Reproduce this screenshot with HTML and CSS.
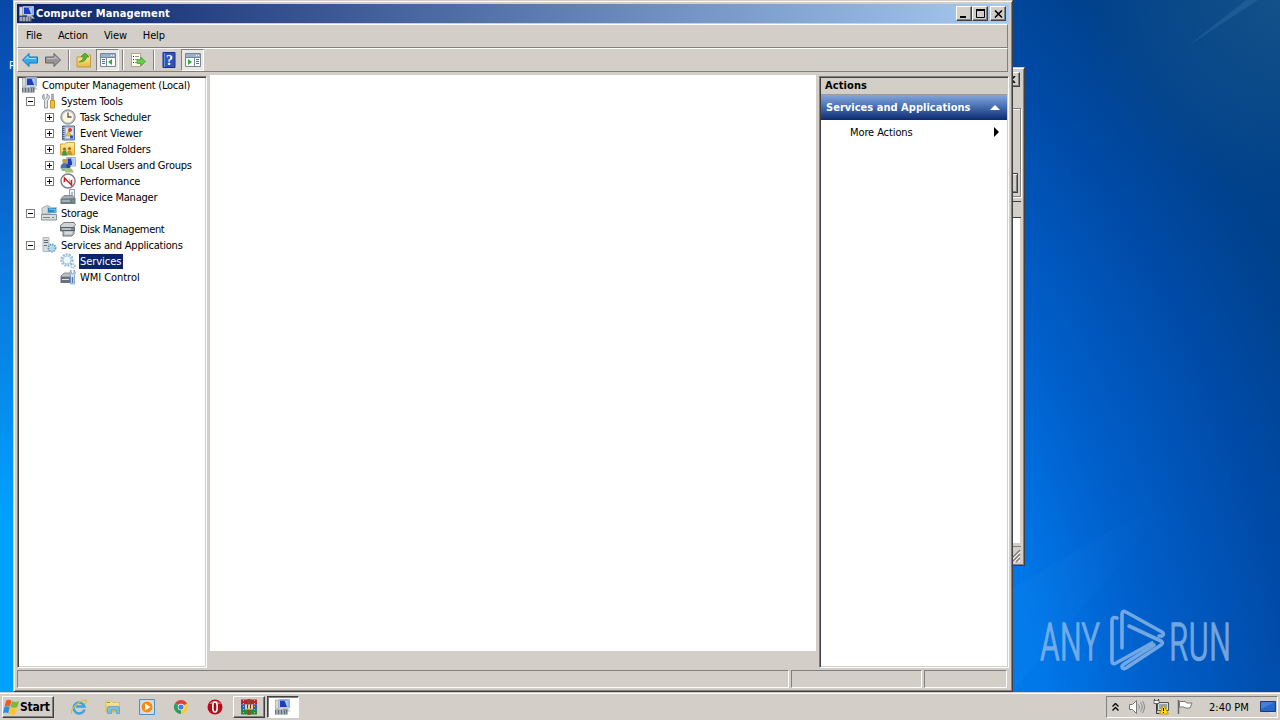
FILE: index.html
```html
<!DOCTYPE html>
<html lang="en">
<head>
    <meta charset="UTF-8">
    <meta name="viewport" content="width=device-width, initial-scale=1.0">
    <title>Computer Management</title>
    <link rel="stylesheet" href="styles.css">
</head>
<body>
    <!-- Shared icons -->
    <svg class="defs" width="0" height="0">
        <defs>
            <linearGradient id="gold" x1="0" y1="0" x2="0" y2="1">
                <stop offset="0" stop-color="#fff0a0"/>
                <stop offset="1" stop-color="#e8b840"/>
            </linearGradient>
            <linearGradient id="ray" x1="0" y1="0" x2="1" y2="0">
                <stop offset="0" stop-color="#40a8ff" stop-opacity=".07"/>
                <stop offset="1" stop-color="#40a8ff" stop-opacity="0"/>
            </linearGradient>
            <symbol id="computer" viewBox="0 0 16 16">
                <path d="M.5 1h3v8.500h-3z" fill="#d8dce0" stroke="#9aa2aa" stroke-width=".7"/>
                <path d="M4 .5h10.500v8.500H4z" fill="#dce4ee" stroke="#a4afbe"/>
                <path d="M5 1.500h8.500v6.500H5z" fill="#1c3cc4"/>
                <path d="M9.500 1.500h4v6.500h-1.500z" fill="#a9c8f8"/>
                <path d="M8 9h4l4 3.500H8z" fill="#c2c8d0"/>
                <path d="M0 10.500h12.500v5H0z" fill="#66717b"/>
                <path d="M1 12h10M1 14h10" stroke="#dbe1e6" stroke-dasharray="2 1"/>
            </symbol>
            <symbol id="panel" viewBox="0 0 16 14">
                <path d="M.5 .5h15v13H.5z" fill="#fff" stroke="#74869c"/>
                <path d="M1 1h14v3H1z" fill="#9bb0ca"/>
                <path d="M11 2.500h1M13 2.500h1" stroke="#fff"/>
                <path d="M1 4.500h14" stroke="#74869c"/>
            </symbol>
        </defs>
    </svg>

    <div class="desktop">
        <svg class="rays" width="268" height="692" viewBox="0 0 268 692">
            <path d="M176 46L234 0h12z" fill="#7ab4e0" opacity=".14"/>
            <path d="M0 588L170 490 0 692z" fill="url(#ray)"/>
        </svg>
        <span class="desktop-label">R</span>

        <svg class="watermark" width="200" height="80" viewBox="0 0 200 80">
            <text x="2" y="52" textLength="60" lengthAdjust="spacingAndGlyphs">ANY</text>
            <text x="131" y="52" textLength="62" lengthAdjust="spacingAndGlyphs">RUN</text>
            <g fill="none" stroke="#8fb9ea" stroke-width="3.600" stroke-linejoin="round" stroke-linecap="round">
                <path d="M79 10q-5-2-5 3v40q0 4 4 2l36-20"/>
                <path d="M84 40V6q0-4 4-2l36 20q3 2 0 4l-3 0"/>
                <path d="M91 18l32 15q3 2 0 4L88 60q-4 2-4-2l2-2 30-19"/>
            </g>
        </svg>

        <!-- Window behind, only the right edge shows -->
        <div class="window back-window">
            <div class="back-title"><span class="caption-btn"><svg width="8" height="7" viewBox="0 0 8 7"><path d="M0 0l7 7M7 0L0 7" stroke="#000" stroke-width="1.600"/></svg></span></div>
            <div class="back-group"><span class="back-button"></span></div>
            <div class="back-header"></div>
            <div class="back-list"></div>
            <div class="back-status"><svg width="14" height="14" viewBox="0 0 14 14"><path d="M1 13L13 1M5 13l8-8M9 13l4-4" stroke="#808080" stroke-width="1.500"/><path d="M3 13L13 3M7 13l6-6M11 13l2-2" stroke="#fff"/></svg></div>
        </div>

        <!-- Main window -->
        <div class="window main-window">
            <div class="title-bar">
                <svg class="icon"><use href="#computer"/></svg>
                <span class="title">Computer Management</span>
                <div class="caption">
                    <span class="caption-btn"><svg width="8" height="8"><path d="M0 6h6v2H0z"/></svg></span>
                    <span class="caption-btn"><svg width="9" height="9"><path d="M.5 .5h8v8h-8z" fill="none" stroke="#000"/><path d="M0 1h9" stroke="#000" stroke-width="2"/></svg></span>
                    <span class="caption-btn close"><svg width="9" height="8" viewBox="0 0 9 8"><path d="M1 .5l7 7M8 .5l-7 7" stroke="#000" stroke-width="1.600"/></svg></span>
                </div>
            </div>

            <div class="band menu">
                <span>File</span>
                <span>Action</span>
                <span>View</span>
                <span>Help</span>
            </div>

            <div class="band toolbar">
                <svg class="tool" viewBox="0 0 16 16"><path d="M.5 8l6.500-6.500v3.500h8.500v6H7v3.500z" fill="#35aaf0" stroke="#1274b8"/><path d="M3 7.500l3-3v2h8" fill="none" stroke="#a4e0ff"/></svg>
                <svg class="tool forward" viewBox="0 0 16 16"><path d="M15.500 8L9 1.500v3.500H.5v6H9v3.500z" fill="#969696" stroke="#626262"/><path d="M2 6.500h8v-2l3 3" fill="none" stroke="#c4c4c4"/></svg>
                <i class="separator"></i>
                <svg class="tool" viewBox="0 0 16 16"><path d="M1 15V5h4l1-2h8.500v12z" fill="url(#gold)" stroke="#c39a3c"/><path d="M3 10c2-1 4-2 4.500-5H5l4-4 4 4h-2.500c0 3-3 5-7.500 5z" fill="#52b82e" stroke="#2d8420" stroke-width=".6"/></svg>
                <span class="tool-button pressed"><svg width="16" height="14"><use href="#panel"/><path d="M6.500 5v8" stroke="#74869c"/><path d="M2 6.500h3M2 8.500h3M2 10.500h3" stroke="#5a7290"/><path d="M8 9l4-3v6z" fill="#36a936"/></svg></span>
                <i class="separator"></i>
                <svg class="tool" viewBox="0 0 16 16"><path d="M1.500 1.500h9v13h-9z" fill="#fffce8" stroke="#b0a884"/><path d="M3 4.500h1M3 7.500h1M3 10.500h1" stroke="#333"/><path d="M5 4.500h4M5 7.500h3M5 10.500h3" stroke="#8a90b0"/><path d="M7 7.500h4V5l4.500 4.500L11 14v-2.500H7z" fill="#64d048" stroke="#36a02a" stroke-width=".7"/></svg>
                <i class="separator"></i>
                <svg class="tool help" viewBox="0 0 16 16"><path d="M2 .5h12v15H2z" fill="#3152bd" stroke="#1b3180"/><path d="M3.500 1v14" stroke="#6c8fe8"/><text x="5" y="13" class="question">?</text></svg>
                <span class="tool-button pressed"><svg width="16" height="14"><use href="#panel"/><path d="M9.500 5v8" stroke="#74869c"/><path d="M11 6.500h3M11 8.500h3M11 10.500h3" stroke="#5a7290"/><path d="M3 6l4 3-4 3z" fill="#36a936"/></svg></span>
            </div>

            <div class="content">
                <ul class="tree">
                    <li class="root"><svg class="icon"><use href="#computer"/></svg><span>Computer Management (Local)</span></li>
                    <li class="level1"><i class="toggle"></i><svg class="icon" viewBox="0 0 16 16"><path d="M3 1v4l1.500 1L6 5V1c3 1 3 5 .5 6.500V15h-3V7.500C1 6 1 2 3 1z" fill="#e2e5e8" stroke="#7c848c" stroke-width=".8"/><path d="M10.500 1h2v6h-2z" fill="#aab2ba" stroke="#7c848c" stroke-width=".5"/><path d="M9.500 7.500h4v7.500h-4z" fill="#f4c22c" stroke="#b88612" stroke-width=".8"/></svg><span>System Tools</span></li>
                    <li class="level2"><i class="toggle plus"></i><svg class="icon" viewBox="0 0 16 16"><circle cx="8" cy="8" r="7.200" fill="#b8bcc4" stroke="#74787e" stroke-width=".8"/><circle cx="8" cy="8" r="5.500" fill="#fdf6dc"/><path d="M8 3.500V8h3.500" fill="none" stroke="#4c5870" stroke-width="1.300"/></svg><span>Task Scheduler</span></li>
                    <li class="level2"><i class="toggle plus"></i><svg class="icon" viewBox="0 0 16 16"><path d="M2.500 1h12v14h-12z" fill="#a9c0e6" stroke="#5a6c90"/><path d="M3.500 1v14" stroke="#4c5c80" stroke-width="2" stroke-dasharray="1 1"/><path d="M6 3h7v10H6z" fill="#dfe8f4"/><circle cx="10" cy="5" r="2" fill="#d63a2c"/><path d="M8.500 6l3 5h-5.500z" fill="#f5cb30" stroke="#b07810" stroke-width=".5"/><path d="M10 10.500h3v3h-3z" fill="#3658ac"/></svg><span>Event Viewer</span></li>
                    <li class="level2"><i class="toggle plus"></i><svg class="icon" viewBox="0 0 16 16"><path d="M.5 14V3h5l1-1.500h8V14z" fill="url(#gold)" stroke="#d3a63c"/><circle cx="4.500" cy="8" r="1.500" fill="#a8641c"/><circle cx="9.500" cy="7.500" r="1.500" fill="#a8641c"/><path d="M2 14.500q0-5 2.500-5t2.500 5z" fill="#3a9a4c"/><path d="M7 14q0-4.500 2.500-4.500t2.500 4.500z" fill="#c8902c"/></svg><span>Shared Folders</span></li>
                    <li class="level2"><i class="toggle plus"></i><svg class="icon" viewBox="0 0 16 16"><path d="M6.500 .5h9v8.500h-9z" fill="#dfe6ee" stroke="#a4b0c2"/><path d="M7.500 1.500h4.500v6.500H7.500z" fill="#1c3cc4"/><path d="M11 1.500h3.500v6.500h-2z" fill="#a9c8f8"/><circle cx="4.500" cy="4" r="2.300" fill="#c89838"/><path d="M.5 11.500q0-5.500 4-5.500t4 5.500z" fill="#4474ba"/><circle cx="8.500" cy="9" r="2.200" fill="#3a4678"/><path d="M5 15.500q0-4.500 4-4.500t4.500 4.500z" fill="#a6c080"/><path d="M1 11.500h4.500v2.500H2z" fill="#8cbc6c"/></svg><span>Local Users and Groups</span></li>
                    <li class="level2"><i class="toggle plus"></i><svg class="icon" viewBox="0 0 16 16"><circle cx="8" cy="8" r="7" fill="#fff" stroke="#7c8286" stroke-width="1.500"/><path d="M3.500 10l1-5 2.500 2M9 5.500l1 4 3-4" fill="none" stroke="#c8c8c8"/><path d="M4.500 9V5l7 7V7" fill="none" stroke="#d01c24" stroke-width="1.500"/></svg><span>Performance</span></li>
                    <li class="level2"><i class="toggle none"></i><svg class="icon" viewBox="0 0 16 16"><path d="M9.500 .5h5v9h-5z" fill="#f4f5f6" stroke="#9aa0a6"/><path d="M12 3v4" stroke="#6090b0"/><path d="M1 9.500l3-3h8l3.500 3z" fill="#a5adb4" stroke="#6b737a" stroke-width=".7"/><path d="M.5 10h15v5H.5z" fill="#727b84"/><path d="M2 12h8" stroke="#d9dfe3"/><path d="M12 12h2" stroke="#50d060"/></svg><span>Device Manager</span></li>
                    <li class="level1"><i class="toggle"></i><svg class="icon" viewBox="0 0 16 16"><path d="M1 3l5-2.500 3 1V9H1z" fill="#d9dcdf" stroke="#888f94" stroke-width=".7"/><path d="M6.500 2.500h9V8h-9z" fill="#2888c4" stroke="#b2c5d0"/><path d="M8 4l6 .5v2.500" fill="none" stroke="#82d4f4"/><path d="M.5 9.500h15v5.500H.5z" fill="#d8dcde" stroke="#777f84" stroke-width=".8"/><path d="M2 12.500h7" stroke="#7e878d"/><path d="M11 12.500h2" stroke="#32b04a"/></svg><span>Storage</span></li>
                    <li class="level2"><i class="toggle none"></i><svg class="icon" viewBox="0 0 16 16"><path d="M.5 4.500L4 1.500h10l1.500 2-2 3H.5z" fill="#d0d4d6" stroke="#596066" stroke-width=".8"/><path d="M.5 6.500h14v3.500H.5z" fill="#828a90" stroke="#50575c" stroke-width=".8"/><path d="M3 9.500h11v3L12 15H3z" fill="#bcc2c6" stroke="#50575c" stroke-width=".8"/><path d="M2 8h9M5 12h7" stroke="#f0f2f4"/></svg><span class="tight">Disk Management</span></li>
                    <li class="level1"><i class="toggle"></i><svg class="icon" viewBox="0 0 16 16"><path d="M2 .5h6v14H2z" fill="#d7dce1" stroke="#a3acb4" stroke-width=".8"/><path d="M3 3.500h4M3 5.500h4M3 8.500h3" stroke="#616c76"/><circle cx="11" cy="11" r="3.500" fill="#d7edf8" stroke="#5f9cc2" stroke-width="2" stroke-dasharray="1.500 .8"/><circle cx="11" cy="11" r="1.200" fill="#fff" stroke="#5f9cc2" stroke-width=".6"/></svg><span>Services and Applications</span></li>
                    <li class="level2 selected"><i class="toggle none"></i><svg class="icon" viewBox="0 0 16 16"><circle cx="7" cy="7" r="5.500" fill="none" stroke="#9abdd8" stroke-width="2.500" stroke-dasharray="2 1"/><circle cx="7" cy="7" r="4" fill="#f0f9ff" stroke="#a9cce2"/><circle cx="13" cy="13" r="2" fill="#e9f5fa" stroke="#8baec4" stroke-width="1.300" stroke-dasharray="1 .7"/></svg><span class="wide">Services</span></li>
                    <li class="level2"><i class="toggle none"></i><svg class="icon" viewBox="0 0 16 16"><path d="M1 7l3-3h8v4H1z" fill="#bac0c6" stroke="#68727c" stroke-width=".7"/><path d="M.5 8h12v6H.5z" fill="#66717b"/><path d="M2 10.500h7" stroke="#dce1e5"/><path d="M11 1v3l1.500 1L14 4V1q2.500 2.500 .5 5v9h-4V6q-2-2.500 .5-5z" fill="#d9e7fa" stroke="#6886b4" stroke-width=".7"/><path d="M12.500 8v6" stroke="#4a78d0" stroke-width="1.500"/></svg><span class="wide">WMI Control</span></li>
                </ul>

                <div class="details"></div>

                <div class="actions">
                    <div class="actions-title">Actions</div>
                    <div class="actions-group">
                        <span>Services and Applications</span>
                        <i class="arrow-up"></i>
                    </div>
                    <div class="action">
                        <span>More Actions</span>
                        <i class="arrow-right"></i>
                    </div>
                </div>
            </div>

            <div class="status-bar">
                <div class="status"></div>
                <div class="status medium"></div>
                <div class="status small"></div>
            </div>
        </div>
    </div>

    <div class="taskbar">
        <div class="start">
            <svg width="17" height="17" viewBox="0 0 16 16"><path d="M3 1.500q2.500-1.500 5 0L6.500 7q-2.500-1.500-5 0z" fill="#ee5a24"/><path d="M8.500 2q3 1.500 6.500 0l-1.500 5.500q-3 1.500-6.500 0z" fill="#77bb30"/><path d="M1.300 7.500q2.500-1.500 5 0L5 13.500q-2.500-1.500-5 0z" fill="#2c8ed8"/><path d="M7 8.200q3 1.500 6.300 0L12 14q-3 1.500-6.500 0z" fill="#ffc42a"/></svg>
            <span>Start</span>
        </div>
        <div class="quick-launch">
            <svg viewBox="0 0 16 16"><path d="M13.500 10.500A5.500 5.500 0 1 1 13.500 7.500H5" fill="none" stroke="#38a5e4" stroke-width="2.500"/><path d="M1 14.500C-2 12 8 1 14.500 1q2 .5-.5 4" fill="none" stroke="#e4b937" stroke-width="1.200"/></svg>
            <svg viewBox="0 0 16 16"><path d="M1 2h5l1 1.500h7.500V13H1z" fill="url(#gold)" stroke="#d7b65c" stroke-width=".8"/><path d="M2 3.500h3" stroke="#4caf4c"/><path d="M2.500 14.500V9q0-1.500 1.500-1.500h9q1.500 0 1.500 1.500v5.500h-3V11h-5v3.500z" fill="#79bfe6" stroke="#4c94c4" stroke-width=".6"/></svg>
            <svg viewBox="0 0 16 16"><path d="M.5 .5h15v15H.5z" fill="#c2ddf2" stroke="#4891cb"/><circle cx="8" cy="8" r="6" fill="#f58a14" stroke="#fff" stroke-width=".6"/><path d="M6 4.500L11.500 8 6 11.500z" fill="#fff"/></svg>
            <svg viewBox="0 0 16 16"><path d="M8 8L1.900 4.500A7 7 0 0 1 14.100 4.500z" fill="#dc4437"/><path d="M8 8l6.100-3.500A7 7 0 0 1 8 15z" fill="#f7cb3e"/><path d="M8 8v7A7 7 0 0 1 1.900 4.500z" fill="#2e9f59"/><circle cx="8" cy="8" r="3.300" fill="#fff"/><circle cx="8" cy="8" r="2.600" fill="#437fe2"/></svg>
            <svg viewBox="0 0 16 16"><circle cx="8" cy="8" r="7.500" fill="#b80d18"/><path d="M2 5a7 6 0 0 1 12 0z" fill="#df6a6a"/><ellipse cx="8" cy="8" rx="2.200" ry="5" fill="#a70814" stroke="#fff" stroke-width="1.700"/></svg>
        </div>
        <div class="task"><svg width="16" height="16" viewBox="0 0 16 16"><path d="M0 .5h16v5H0z" fill="#bc2332"/><path d="M0 5.500h16V10H0z" fill="#2d5fc0"/><path d="M0 10h16v5.500H0z" fill="#238c3c"/><path d="M6.500 0h3v16h-3z" fill="#84501e"/><path d="M4 5.500h8v5H4z" fill="#e2cfaa"/><path d="M6.500 5.500v4M9.500 5.500v4" stroke="#5c3818"/><path d="M2.500 1v14M13.500 1v14" stroke="#d8b85c" stroke-dasharray="1 2"/></svg></div>
        <div class="task active"><svg width="16" height="16"><use href="#computer"/></svg></div>

        <div class="tray">
            <svg class="chevrons" width="7" height="8" viewBox="0 0 7 8"><path d="M.5 3.500l3-3 3 3M.5 7.500l3-3 3 3" fill="none" stroke="#000" stroke-width="1.300"/></svg>
            <svg class="speaker" width="16" height="14" viewBox="0 0 16 14"><path d="M.5 4.500h3l4-4v13l-4-4h-3z" fill="#fff" stroke="#777"/><path d="M9.500 4.500q2 2.500 0 5M11.500 2.500q3.500 4.500 0 9M13.500 1q4 6 0 12" fill="none" stroke="#888"/></svg>
            <svg class="network" width="16" height="16" viewBox="0 0 16 16"><path d="M4.500 3.500h11v8h-11z" fill="#ddd" stroke="#555"/><path d="M6 5h8v5H6z" fill="#98a6b0"/><path d="M1.500 0v4h4V0M3.500 4v10.500h4" fill="none" stroke="#333"/><path d="M1 1.500h5v3H1z" fill="#fff" stroke="#444" stroke-width=".7"/><path d="M10.500 6l5 9h-9z" fill="#ffd91c" stroke="#b88b00" stroke-width=".8"/><path d="M10.500 9v3M10.500 13v1" stroke="#000"/></svg>
            <svg class="flag" width="16" height="14" viewBox="0 0 16 14"><path d="M1.500 0v14" stroke="#666" stroke-width="1.500"/><path d="M2.500 1.500h6l1 1.500h5.500l-2 5H8L7 7H2.500z" fill="#fff" stroke="#777"/></svg>
            <span class="clock">2:40 PM</span>
            <svg width="16" height="13" viewBox="0 0 16 13"><path d="M.5 .5h15v10H.5z" fill="#2866c8" stroke="#173b7e"/><path d="M1 1h14L1 8z" fill="#4580d4"/><path d="M9 11h5v1.500H9z" fill="#c4e4fa"/></svg>
        </div>
    </div>
</body>
</html>
```

FILE: styles.css
```css
* {
    margin: 0;
    padding: 0;
    box-sizing: border-box;
}

body {
    width: 1280px;
    height: 720px;
    overflow: hidden;
    font-family: 'DejaVu Sans Condensed', 'DejaVu Sans', sans-serif;
    font-stretch: condensed;
    font-size: 11px;
    letter-spacing: -0.22px;
    color: #000;
    background-color: #d4cec8;
}

svg {
    display: block;
    flex-shrink: 0;
}

.defs {
    position: absolute;
}

/* Desktop */
.desktop {
    position: relative;
    height: 692px;
    overflow: hidden;
    background:
        linear-gradient(#0848a8 0, #0858c0 120px, #087adf 290px, #00a2ff 520px, #00a2ff 100%) 0 0 / 14px 100% no-repeat,
        radial-gradient(circle at 100% 0, rgba(32, 92, 140, 0.6), transparent 200px),
        radial-gradient(circle at 200px 820px, #0078ea 850px, #0060cc 960px, #004ba8 1100px, #00418c 1210px, #004086 1300px);
}

.rays {
    position: absolute;
    top: 0;
    right: 0;
}

.desktop-label {
    position: absolute;
    top: 59px;
    left: 9px;
    color: #fff;
}

.watermark {
    position: absolute;
    left: 1038px;
    top: 608px;
    overflow: visible;
    opacity: 0.8;
}

.watermark text {
    font-family: Roboto, sans-serif;
    font-size: 52px;
    font-weight: 300;
    letter-spacing: 0;
    fill: #8fb9ea;
    stroke: #8fb9ea;
    stroke-width: 1.4px;
}

/* Windows */
.window {
    position: absolute;
    display: flex;
    flex-direction: column;
    background-color: #d4cec8;
    border: 1px solid;
    border-color: #d4cec8 #404040 #404040 #d4cec8;
    box-shadow: inset 1px 1px #fff, inset -1px -1px #808080;
}

.main-window {
    top: 0;
    left: 13px;
    width: 1000px;
    height: 692px;
    padding: 3px;
}

.title-bar {
    display: flex;
    align-items: center;
    height: 19px;
    padding: 0 3px 0 2px;
    color: #fff;
    background: linear-gradient(90deg, #0a246a, #a6caf0);
}

.icon {
    width: 16px;
    height: 16px;
}

.title {
    margin-left: 1px;
    font-weight: bold;
    letter-spacing: 0.15px;
}

.caption {
    display: flex;
    margin-left: auto;
}

.caption-btn {
    display: flex;
    align-items: center;
    justify-content: center;
    width: 16px;
    height: 15px;
    background-color: #d4cec8;
    border: 1px solid;
    border-color: #fff #404040 #404040 #fff;
    box-shadow: inset -1px -1px #808080;
}

.caption-btn.close {
    margin-left: 2px;
}

.band {
    display: flex;
    align-items: center;
    height: 24px;
    margin-right: 1px;
    border: 1px solid #fff;
    border-right-color: #808080;
    border-bottom-color: #808080;
}

.menu {
    gap: 16px;
    margin-top: 1px;
    padding-left: 8px;
    line-height: 22px;
    letter-spacing: -0.15px;
}

.toolbar {
    padding: 0 0 0 4px;
}

.tool {
    width: 16px;
    height: 16px;
}

.forward {
    margin-left: 7px;
}

.separator {
    width: 2px;
    height: 20px;
    margin: 0 6px 0 7px;
    border-left: 1px solid #808080;
    border-right: 1px solid #fff;
}

.tool-button {
    display: flex;
    align-items: center;
    justify-content: center;
    width: 23px;
    height: 22px;
    margin-left: 4px;
    border: 1px solid;
}

.tool-button.pressed {
    border-color: #808080 #fff #fff #808080;
    background-color: #ebe8e3;
}

.tool-button + .separator {
    margin-left: 3px;
}

.question {
    font-family: 'Liberation Serif', serif;
    font-size: 14px;
    font-weight: bold;
    fill: #fff;
}

/* Main area */
.content {
    display: flex;
    height: 593px;
    margin-top: 3px;
}

.tree,
.actions {
    margin-top: 1px;
    padding: 1px;
    background-color: #fff;
    border: 1px solid;
    border-color: #808080 #fff #fff #808080;
    box-shadow: inset 1px 1px #404040, inset -1px -1px #d4cec8;
}

.tree {
    width: 190px;
    padding-top: 0;
    list-style: none;
}

.tree li {
    display: flex;
    align-items: center;
    height: 16px;
    white-space: nowrap;
}

.tree li span {
    height: 15px;
    margin-left: 3px;
    padding: 0 1px;
    line-height: 15px;
}

.tree .root {
    padding-left: 3px;
}

.tree .level1 {
    padding-left: 7px;
}

.tree .level2 {
    padding-left: 26px;
}

.tree .tight {
    letter-spacing: -0.35px;
}

.tree .wide {
    letter-spacing: -0.05px;
}

.toggle {
    width: 9px;
    height: 9px;
    margin-right: 6px;
    border: 1px solid #808080;
    background: linear-gradient(#000, #000) center / 5px 1px no-repeat;
}

.toggle.plus {
    background:
        linear-gradient(#000, #000) center / 5px 1px no-repeat,
        linear-gradient(#000, #000) center / 1px 5px no-repeat;
}

.toggle.none {
    visibility: hidden;
}

.tree .selected span {
    padding-right: 2px;
    color: #fff;
    background-color: #0a246a;
}

.details {
    flex: 1;
    height: 576px;
    margin: 0 3px;
    background-color: #fff;
}

.actions {
    width: 190px;
}

.actions-title {
    height: 17px;
    padding-left: 4px;
    line-height: 16px;
    font-weight: bold;
    letter-spacing: 0.1px;
    background-color: #d4cec8;
    border-bottom: 1px solid #a09c94;
}

.actions-group {
    display: flex;
    align-items: center;
    justify-content: space-between;
    height: 25px;
    padding: 0 7px 0 5px;
    font-weight: bold;
    letter-spacing: 0.03px;
    color: #fff;
    background: linear-gradient(#84a6da, #426bb0 50%, #0e2a70);
}

.arrow-up {
    border: 5px solid transparent;
    border-top: 0;
    border-bottom-color: #fff;
}

.action {
    display: flex;
    align-items: center;
    justify-content: space-between;
    height: 24px;
    padding: 0 8px 0 29px;
    letter-spacing: -0.1px;
}

.arrow-right {
    border: 5px solid transparent;
    border-right: 0;
    border-left-color: #000;
}

.status-bar {
    display: flex;
    gap: 2px;
    height: 18px;
    margin: 2px 2px 0 0;
}

.status {
    flex: 1;
    border: 1px solid;
    border-color: #808080 #fff #fff #808080;
}

.status.medium {
    flex: 0 0 131px;
}

.status.small {
    flex: 0 0 83px;
}

/* Window behind */
.back-window {
    top: 67px;
    left: 725px;
    width: 300px;
    height: 499px;
    padding: 4px 3px 2px;
}

.back-title {
    display: flex;
    justify-content: flex-end;
    height: 36px;
    padding-right: 1px;
}

.back-group {
    display: flex;
    justify-content: flex-end;
    align-items: flex-end;
    height: 89px;
    padding: 0 2px 3px 0;
    border: 1px solid #808080;
    box-shadow: 1px 1px #fff, inset 0 1px #fff;
}

.back-button {
    width: 75px;
    height: 20px;
    border: 1px solid #404040;
    box-shadow: inset 1px 1px #fff, inset -1px -1px #808080;
}

.back-header {
    height: 17px;
    margin-top: 4px;
    border-top: 1px solid #404040;
    border-bottom: 1px solid #404040;
}

.back-list {
    height: 326px;
    background-color: #fff;
    border-right: 1px solid #d4cec8;
}

.back-status {
    display: flex;
    justify-content: flex-end;
    height: 17px;
    margin-top: 3px;
    padding-top: 2px;
    border-top: 1px solid #808080;
}

/* Taskbar */
.taskbar {
    display: flex;
    align-items: center;
    height: 28px;
    padding: 1px 2px 0;
    border-top: 1px solid #d4cec8;
    box-shadow: inset 0 1px #fff;
    background-color: #d4cec8;
}

.start,
.task {
    display: flex;
    align-items: center;
    height: 22px;
    border: 1px solid;
    border-color: #fff #404040 #404040 #fff;
    box-shadow: inset -1px -1px #808080;
}

.start {
    width: 52px;
    font-size: 12px;
    font-weight: bold;
}

.quick-launch {
    display: flex;
    gap: 18px;
    margin-left: 17px;
}

.quick-launch svg {
    width: 16px;
    height: 16px;
}

.task {
    justify-content: center;
    width: 32px;
    margin-left: 10px;
}

.task.active {
    margin-left: 2px;
    border-color: #404040 #fff #fff #404040;
    box-shadow: inset 1px 1px #808080;
    background-color: #fff;
}

.tray {
    display: flex;
    align-items: center;
    width: 172px;
    height: 22px;
    margin-left: auto;
    padding-left: 5px;
    border: 1px solid;
    border-color: #808080 #fff #fff #808080;
}

.speaker {
    margin-left: 10px;
}

.network,
.flag {
    margin-left: 8px;
}

.clock {
    width: 67px;
    padding-left: 16px;
    letter-spacing: 0;
    white-space: nowrap;
}
```
